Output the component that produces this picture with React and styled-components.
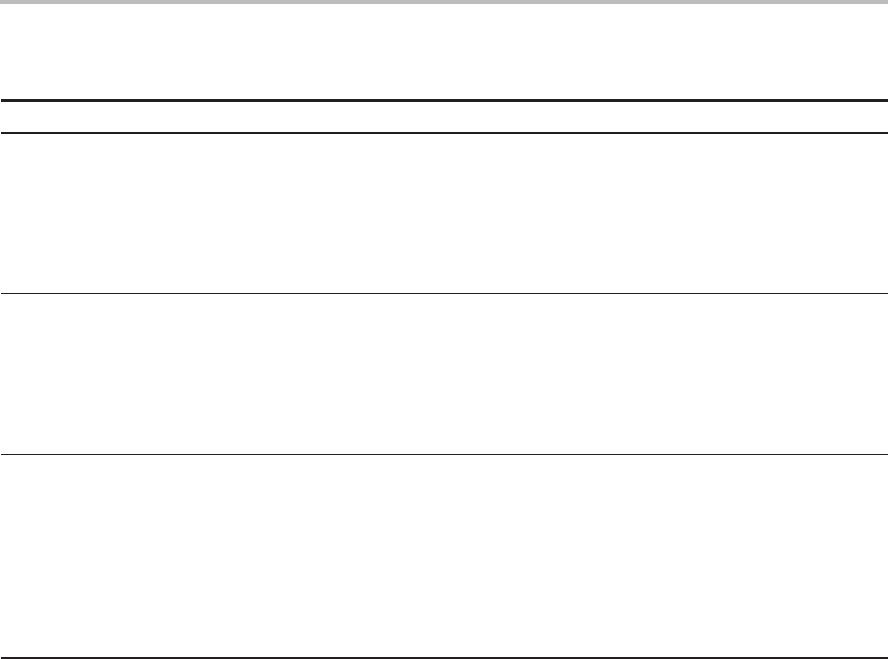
import styled, { createGlobalStyle } from "styled-components";

const GlobalStyle = createGlobalStyle`
  html, body {
    margin: 0;
    padding: 0;
    background: #ffffff;
    font-family: "Liberation Sans", Arial, sans-serif;
    overflow: hidden;
  }
`;

const Page = styled.div`
  width: 888px;
  height: 659px;
  display: flex;
  flex-direction: column;
`;

const TopBar = styled.div`
  height: 4px;
  background: #bcbdbf;
  flex-shrink: 0;
`;

const Table = styled.div`
  margin: 95px 0 0 1px;
  border-top: 3px solid #231f20;
  display: flex;
  flex-direction: column;
`;

const HeaderRow = styled.div`
  height: 30px;
  border-bottom: 2px solid #231f20;
`;

const Row = styled.div`
  height: ${(p) => p.$height}px;
  border-bottom: ${(p) => (p.$last ? "2px" : "1px")} solid #231f20;
`;

const rows = [159, 160, 202];

function App() {
  return (
    <>
      <GlobalStyle />
      <Page>
        <TopBar />
        <Table>
          <HeaderRow />
          {rows.map((h, i) => (
            <Row key={i} $height={h} $last={i === rows.length - 1} />
          ))}
        </Table>
      </Page>
    </>
  );
}

export default App;
